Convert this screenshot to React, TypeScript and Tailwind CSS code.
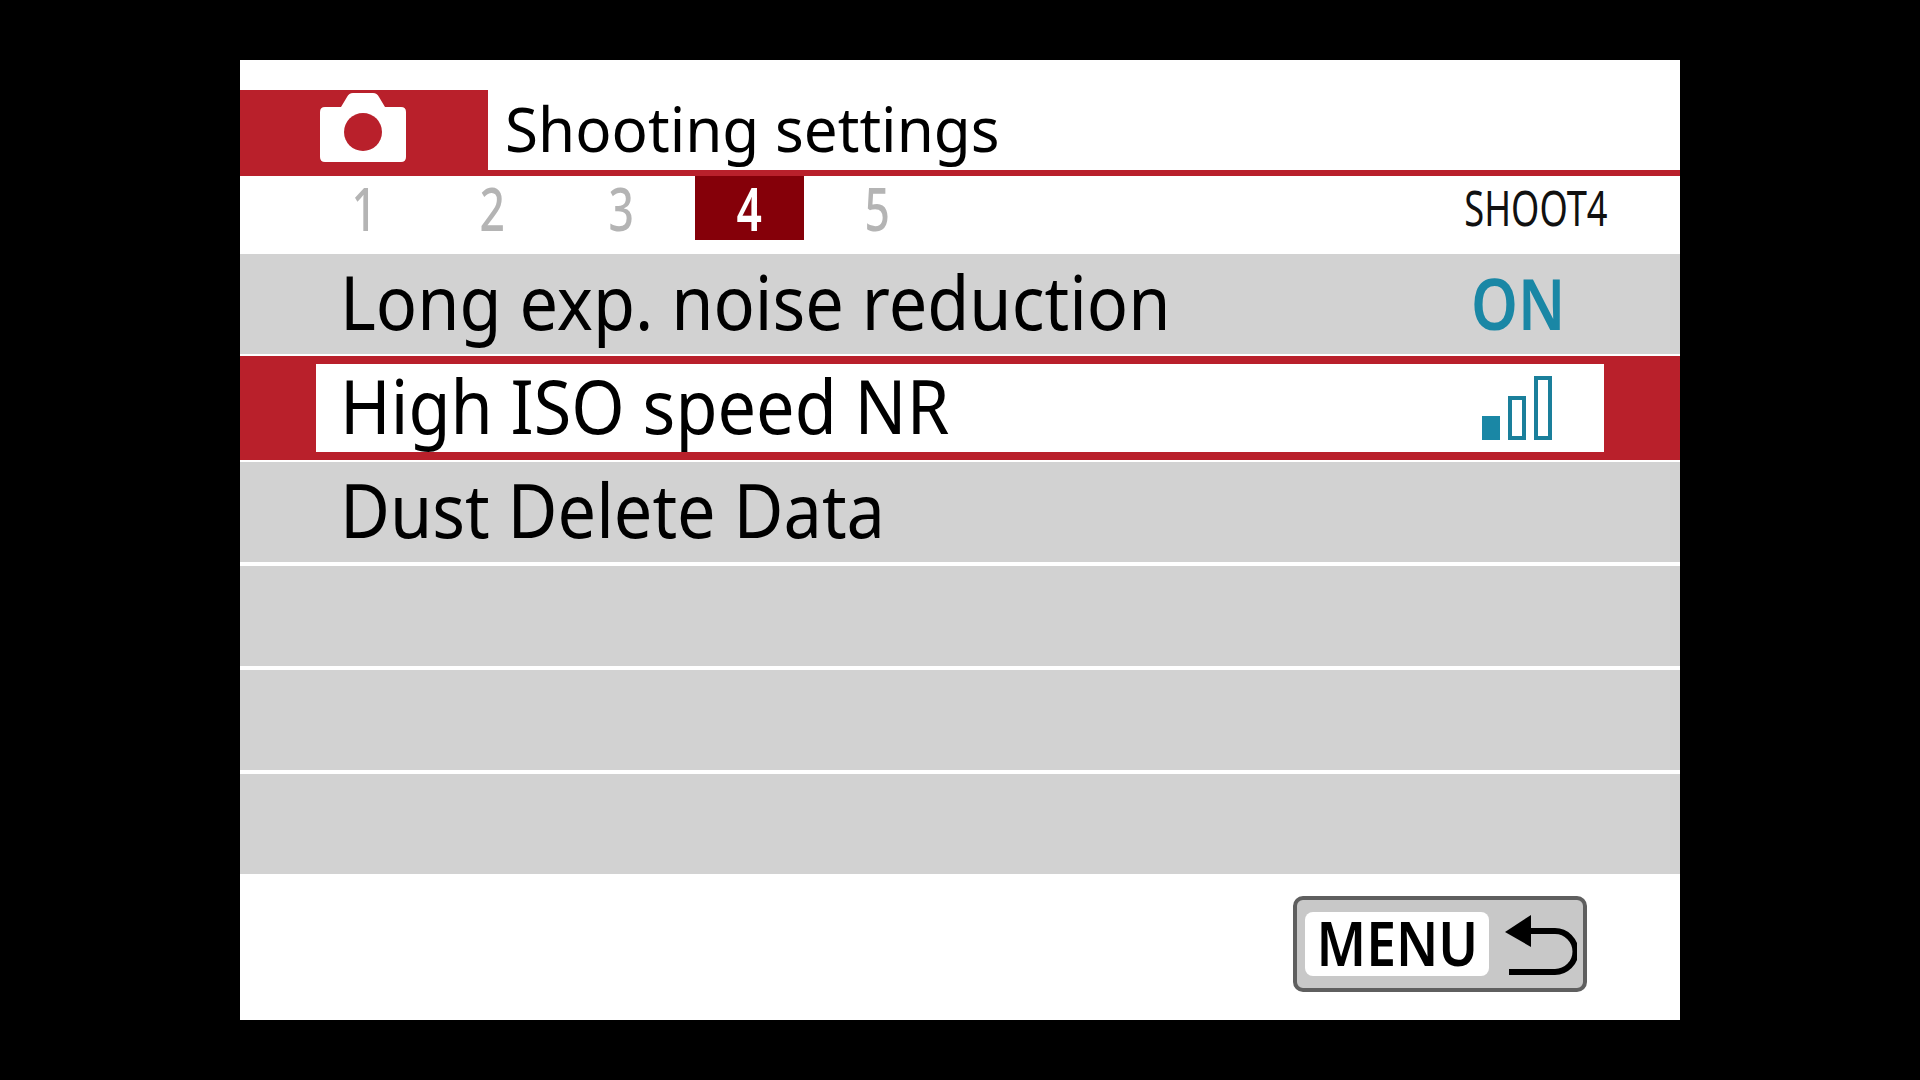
export default function App() {
  const font = "font-['Noto_Sans','Open_Sans',sans-serif]";
  return (
    <div className={`w-[1920px] h-[1080px] bg-black flex items-center justify-center overflow-hidden ${font}`}>
      <div className="w-[1440px] h-[960px] bg-white flex flex-col">
        <div className="h-[30px]" />
        <div className="h-[80px] flex">
          <div className="w-[248px] h-full bg-[#b9202b] flex pl-[80px] pt-[3px]">
            <svg width="86" height="70" viewBox="0 0 86 70">
              <path d="M21 14 L27 4 Q29 0 33 0 H53 Q57 0 59 4 L65 14 H81 Q86 14 86 19 V64 Q86 69 81 69 H5 Q0 69 0 64 V19 Q0 14 5 14 Z" fill="#fff" />
              <circle cx="43" cy="39" r="19" fill="#b9202b" />
            </svg>
          </div>
          <div className="pl-[17px] text-[62px] leading-[76px] text-black whitespace-nowrap">
            <span className="inline-block origin-left scale-x-[0.97]">Shooting settings</span>
          </div>
        </div>
        <div className="h-[6px] bg-[#b9202b]" />
        <div className="h-[64px] flex items-start pl-[60px] pr-[72px]">
          {["1", "2", "3", "4", "5"].map((n) => (
            <div key={n} className="w-[128.3px] flex justify-center">
              <div className={`w-[109px] h-[64px] flex items-center justify-center text-[60px] leading-[62px] ${n === "4" ? "bg-[#850009] text-white font-semibold" : "text-[#b4b4b4] font-medium"}`}>
                <span className="scale-x-[0.74] inline-block">{n}</span>
              </div>
            </div>
          ))}
          <div className="ml-auto h-[64px] flex items-center text-[49px] leading-[62px] text-[#111] whitespace-nowrap">
            <span className="inline-block origin-right scale-x-[0.74] -mt-[2px]">SHOOT4</span>
          </div>
        </div>
        <div className="h-[14px]" />
        <div className="h-[100px] bg-[#d2d2d2] flex items-center pl-[100px] pr-[115px] justify-between">
          <span className="inline-block origin-left scale-x-[0.925] -mt-[4px] text-[74px] leading-[100px] text-black whitespace-nowrap">Long exp. noise reduction</span>
          <span className="inline-block origin-right scale-x-[0.84] -mt-[2px] text-[71px] leading-[100px] font-semibold text-[#1a87a5]">ON</span>
        </div>
        <div className="h-[2px]" />
        <div className="h-[104px] bg-[#b9202b] px-[76px] py-[8px]">
          <div className="h-[88px] bg-white flex items-center pl-[24px] pr-[52px] justify-between">
            <span className="inline-block origin-left scale-x-[0.925] -mt-[4px] text-[74px] leading-[88px] text-black whitespace-nowrap">High ISO speed NR</span>
            <div className="flex items-end gap-[8px] h-[64px]">
              <div className="w-[18px] h-[24px] bg-[#1a87a5]" />
              <div className="w-[18px] h-[44px] border-[4px] border-[#1a7f9b]" />
              <div className="w-[18px] h-[64px] border-[4px] border-[#1a7f9b]" />
            </div>
          </div>
        </div>
        <div className="h-[2px]" />
        <div className="h-[100px] bg-[#d2d2d2] flex items-center pl-[100px]">
          <span className="inline-block origin-left scale-x-[0.925] -mt-[4px] text-[74px] leading-[100px] text-black whitespace-nowrap">Dust Delete Data</span>
        </div>
        <div className="h-[4px]" />
        <div className="h-[100px] bg-[#d2d2d2]" />
        <div className="h-[4px]" />
        <div className="h-[100px] bg-[#d2d2d2]" />
        <div className="h-[4px]" />
        <div className="h-[100px] bg-[#d2d2d2]" />
        <div className="h-[22px]" />
        <div className="flex justify-end pr-[93px]">
          <div className="w-[294px] h-[96px] rounded-[10px] border-[4px] border-[#5f5f5f] bg-[#c8c8c8] flex items-center pl-[8px]">
            <div className="w-[184px] h-[64px] rounded-[8px] bg-white flex items-center justify-center text-[61px] leading-[64px] font-semibold text-black">
              <span className="inline-block scale-x-[0.875] -mt-[2px]">MENU</span>
            </div>
            <svg className="ml-[16px] mt-[1px]" width="72" height="64" viewBox="0 0 72 64">
              <path d="M0 19 L26 2 V34 Z" fill="#000" />
              <path d="M20 18 H50 A20.500 20.500 0 0 1 50 59 H4" fill="none" stroke="#000" strokeWidth="6" />
            </svg>
          </div>
        </div>
      </div>
    </div>
  );
}
